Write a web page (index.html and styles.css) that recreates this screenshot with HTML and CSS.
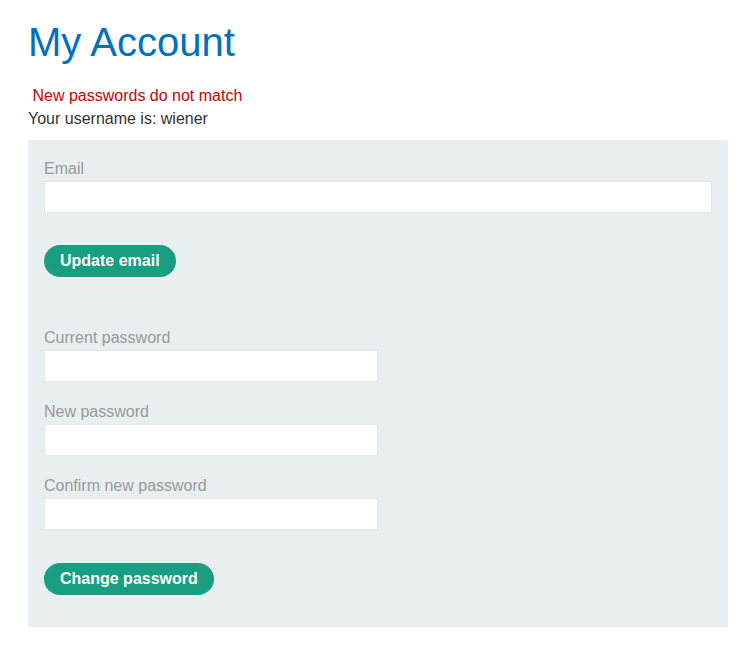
FILE: index.html
```html
<!DOCTYPE html>
<html lang="en">

<head>
    <meta charset="UTF-8" />
    <meta name="viewport" content="width=device-width, initial-scale=1.0" />
    <title>My Account</title>
    <link rel="stylesheet" href="styles.css">
</head>

<body>
    <div class="container">
        <h1>My Account</h1>
        <p class="error">&nbsp;New passwords do not match</p>
        <p class="username">Your username is: wiener</p>

        <div class="account-panel">
            <!-- Change email -->
            <form class="account-form">
                <label for="email">Email</label>
                <input id="email" type="email" class="wide" />
                <button type="submit" class="button">Update email</button>
            </form>

            <!-- Change password -->
            <form class="account-form password-form">
                <label for="currentPassword">Current password</label>
                <input id="currentPassword" type="password" />
                <label for="newPassword">New password</label>
                <input id="newPassword" type="password" />
                <label for="confirmPassword">Confirm new password</label>
                <input id="confirmPassword" type="password" />
                <button type="submit" class="button">Change password</button>
            </form>
        </div>
    </div>
</body>

</html>
```

FILE: styles.css
```css
body {
    margin: 0;
    font-family: "Liberation Sans", Arial, sans-serif;
    background-color: #fff;
    color: #333;
}

.container {
    width: 700px;
    padding: 19px 23px 26px 28px;
}

h1 {
    margin: 0;
    font-size: 40px;
    font-weight: normal;
    line-height: 46px;
    color: #0071bc;
}

.error,
.username {
    margin: 0;
    font-size: 16px;
    line-height: 23px;
}

.error {
    margin-top: 19px;
    color: #c00;
}

.username {
    color: #333;
}

.account-panel {
    margin-top: 10px;
    background-color: #e9eef1;
    padding: 20px 16px 32px 16px;
}

.account-form {
    display: flex;
    flex-direction: column;
    align-items: flex-start;
}

.password-form {
    margin-top: 52px;
}

.account-form label {
    font-size: 16px;
    line-height: 18px;
    color: #999;
    margin-bottom: 3px;
}

.account-form input {
    box-sizing: border-box;
    width: 334px;
    height: 32px;
    margin: 0 0 21px 0;
    padding: 0 8px;
    border: 1px solid #e6e6e6;
    background-color: #fff;
    font-size: 16px;
    font-family: inherit;
}

.account-form input.wide {
    width: 100%;
}

.account-form input:last-of-type {
    margin-bottom: 0;
}

.button {
    margin-top: 32px;
    height: 32px;
    padding: 0 16px;
    background-color: #189e80;
    color: white;
    border: none;
    border-radius: 16px;
    font-family: inherit;
    font-size: 16px;
    font-weight: bold;
    line-height: 32px;
    cursor: pointer;
}

.password-form .button {
    margin-top: 33px;
}
```
